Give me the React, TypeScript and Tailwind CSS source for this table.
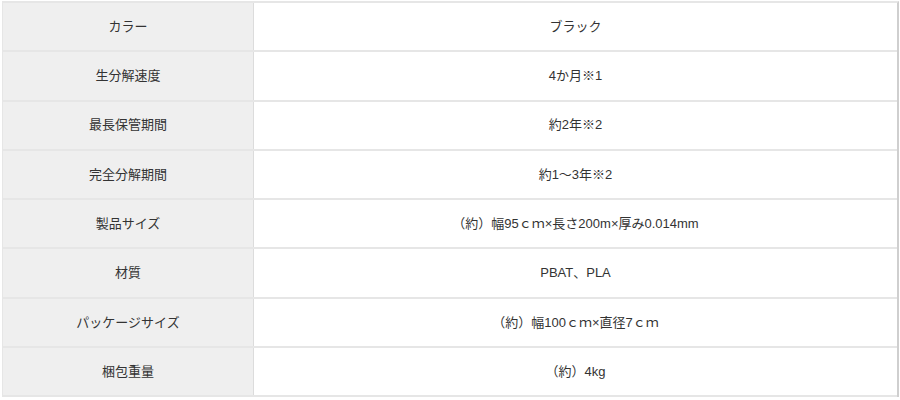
import React from "react";

const rows: [string, string][] = [
  ["カラー", "ブラック"],
  ["生分解速度", "4か月※1"],
  ["最長保管期間", "約2年※2"],
  ["完全分解期間", "約1～3年※2"],
  ["製品サイズ", "（約）幅95ｃｍ×長さ200m×厚み0.014mm"],
  ["材質", "PBAT、PLA"],
  ["パッケージサイズ", "（約）幅100ｃｍ×直径7ｃｍ"],
  ["梱包重量", "（約）4kg"],
];

export default function App() {
  return (
    <div
      className="w-[900px] h-[400px] bg-white pt-[1px] pl-[2px]"
      style={{ fontFamily: '"Liberation Sans", "Noto Sans CJK JP", sans-serif' }}
    >
      <div className="w-[897px] border-t-2 border-[#e6e6e6] border-r-2 border-r-[#cfcfcf] border-l border-l-[#e6e6e6]">
        {rows.map(([k, v], i) => (
          <div key={i} className="flex h-[49.3px] border-b-2 border-[#e6e6e6]">
            <div className="w-[251px] shrink-0 bg-[#efefef] border-r border-[#dcdcdc] flex items-center justify-center text-[13px] text-[#333]">
              {k}
            </div>
            <div className="flex-1 flex items-center justify-center text-[13px] text-[#333]">
              {v}
            </div>
          </div>
        ))}
      </div>
    </div>
  );
}
